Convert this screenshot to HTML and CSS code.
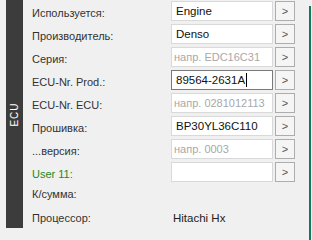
FILE: index.html
```html
<!DOCTYPE html>
<html lang="ru">
<head>
  <meta charset="UTF-8" />
  <title>ECU</title>
  <link rel="stylesheet" href="styles.css">
</head>
<body>

<div class="panel">
  <div class="side"><span>ECU</span></div>

  <div class="form">
    <div class="label">Используется:</div>
    <div class="field">Engine</div>
    <div class="more">&gt;</div>

    <div class="label">Производитель:</div>
    <div class="field">Denso</div>
    <div class="more">&gt;</div>

    <div class="label">Серия:</div>
    <div class="field hint">напр. EDC16C31</div>
    <div class="more">&gt;</div>

    <div class="label">ECU-Nr. Prod.:</div>
    <div class="field active">89564-2631A<span class="caret"></span></div>
    <div class="more">&gt;</div>

    <div class="label">ECU-Nr. ECU:</div>
    <div class="field hint">напр. 0281012113</div>
    <div class="more">&gt;</div>

    <div class="label">Прошивка:</div>
    <div class="field">BP30YL36C110</div>
    <div class="more">&gt;</div>

    <div class="label">...версия:</div>
    <div class="field hint">напр. 0003</div>
    <div class="more">&gt;</div>

    <div class="label user">User 11:</div>
    <div class="field"></div>
    <div class="more">&gt;</div>

    <div class="label sum">К/сумма:</div>
    <div class="value sum"></div>
    <div></div>

    <div class="label cpu">Процессор:</div>
    <div class="value cpu">Hitachi Hx</div>
    <div></div>
  </div>

  <div class="edge"></div>
</div>

</body>
</html>
```

FILE: styles.css
```css
body {
  margin: 0;
  background: #f0f0f0;
  font-family: 'Liberation Sans', Arial, sans-serif;
  font-size: 11px;
  color: #333;
  overflow: hidden;
}

.panel {
  display: flex;
  height: 240px;
}

.side {
  width: 17px;
  height: 228px;
  margin-left: 6px;
  background: #3c3c3c;
  display: flex;
  align-items: center;
  justify-content: center;
}

.side span {
  color: #fff;
  font-size: 10px;
  letter-spacing: 1px;
  transform: rotate(-90deg);
  white-space: nowrap;
}

.form {
  display: grid;
  grid-template-columns: 137px 102px 20px;
  grid-auto-rows: 20px;
  row-gap: 3px;
  column-gap: 2px;
  margin-left: 9px;
  padding-top: 1px;
  align-content: start;
}

.label {
  display: flex;
  align-items: center;
  padding-top: 3px;
  white-space: nowrap;
}

.label.user { color: #1a8a1a; }

.field {
  background: #fff;
  border: 1px solid #d9d9d9;
  padding: 0 4px;
  display: flex;
  align-items: center;
  color: #111;
  font-size: 11.5px;
  white-space: nowrap;
  overflow: hidden;
}

.field.hint {
  color: #a8a8a8;
  padding-left: 2px;
  font-size: 11px;
}

.field.active { border-color: #7a7a7a; }

.caret {
  display: inline-block;
  width: 1px;
  height: 14px;
  background: #000;
  margin-left: 1px;
}

.more {
  border: 1px solid #adadad;
  background: #f5f5f5;
  display: flex;
  align-items: center;
  justify-content: center;
  font-size: 11px;
  color: #555;
}

.value {
  display: flex;
  align-items: center;
  padding: 3px 0 0 2px;
  color: #222;
  font-size: 11.5px;
}

.sum { padding-top: 0; padding-bottom: 2px; }
.cpu { padding-top: 0; padding-bottom: 0; }

.edge {
  margin: 6px 1px 0 auto;
  width: 2px;
  background: #0e7a5e;
}
```
